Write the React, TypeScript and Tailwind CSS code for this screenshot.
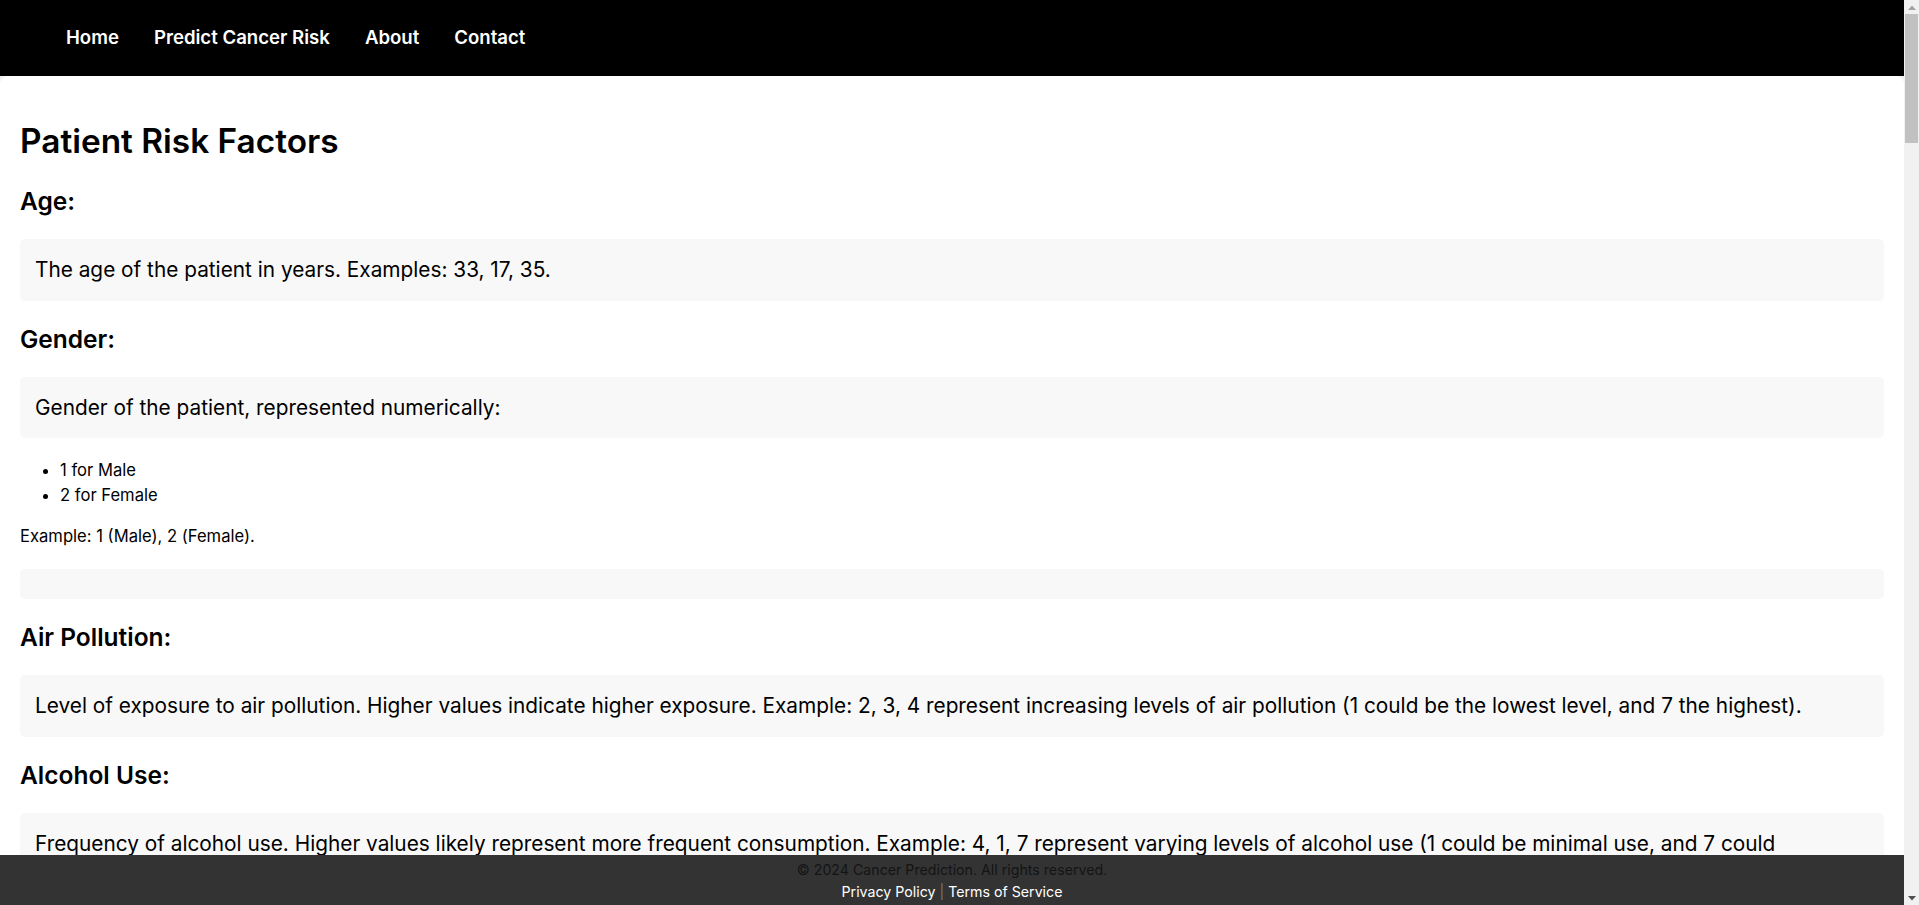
import React from "react";

const navLinks = ["Home", "Predict Cancer Risk", "About", "Contact"];

function Box({ children, wide }: { children?: React.ReactNode; wide?: boolean }) {
  return (
    <div
      className={
        wide
          ? "bg-[#f8f8f8] rounded-[5px] pl-[15px] pr-[30px] py-[15px] my-5 text-[20.8px] leading-[31.5px]"
          : "bg-[#f8f8f8] rounded-[5px] px-[15px] py-[15px] my-5 text-[20.8px] leading-[31.5px]"
      }
    >
      {children}
    </div>
  );
}

function H2({ children }: { children: React.ReactNode }) {
  return <h2 className="text-[24.5px] leading-[36px] font-semibold my-[19.9px]">{children}</h2>;
}

export default function App() {
  return (
    <div className="min-h-screen bg-[#f1f1f1] font-['Inter',sans-serif] text-black pr-[15px]">
      <nav className="bg-black h-[76px] flex items-center pl-[66px] gap-[35px] pb-[2px]">
        {navLinks.map((l) => (
          <a key={l} href="#" className="text-white font-semibold text-[18.6px] leading-[27px]">
            {l}
          </a>
        ))}
      </nav>
      <main className="bg-white rounded-t-[8px] px-5 pt-5 pb-[90px]">
        <h1 className="text-[33.4px] leading-[44px] font-semibold mt-[23px] mb-5">Patient Risk Factors</h1>

        <H2>Age:</H2>
        <Box>The age of the patient in years. Examples: 33, 17, 35.</Box>

        <H2>Gender:</H2>
        <Box>Gender of the patient, represented numerically:</Box>
        <ul className="list-disc pl-10 my-4 text-[16.6px] leading-[25px]">
          <li>1 for Male</li>
          <li>2 for Female</li>
        </ul>
        <p className="text-[16.6px] leading-[25px] my-4">Example: 1 (Male), 2 (Female).</p>
        <Box />

        <H2>Air Pollution:</H2>
        <Box>
          Level of exposure to air pollution. Higher values indicate higher exposure. Example: 2, 3, 4 represent
          increasing levels of air pollution (1 could be the lowest level, and 7 the highest).
        </Box>

        <H2>Alcohol Use:</H2>
        <Box wide>
          Frequency of alcohol use. Higher values likely represent more frequent consumption. Example: 4, 1, 7
          represent varying levels of alcohol use (1 could be minimal use, and 7 could indicate heavy use).
        </Box>

        <H2>Dust Allergy:</H2>
        <Box>
          Severity of dust allergy. Higher values indicate a stronger allergic reaction to dust. Example: 5, 2, 6.
        </Box>

        <H2>Occupational Hazards:</H2>
        <Box>
          Exposure to hazards in the workplace. Higher values indicate greater exposure. Example: 4, 3, 5.
        </Box>

        <H2>Genetic Risk:</H2>
        <Box>Level of inherited genetic risk. Higher values indicate a higher genetic risk. Example: 3, 2, 7.</Box>
      </main>
      <footer className="fixed bottom-0 left-0 right-[15px] h-[50px] bg-[#333] text-center text-[14.2px] pt-[4px]">
        <p className="text-[#141414] leading-[22px]">© 2024 Cancer Prediction. All rights reserved.</p>
        <p className="leading-[22px]">
          <a href="#" className="text-white">Privacy Policy</a>
          <span className="text-[#777]"> | </span>
          <a href="#" className="text-white">Terms of Service</a>
        </p>
      </footer>
      <div className="fixed top-0 right-0 bottom-0 w-[15px] bg-[#f1f1f1] flex flex-col items-center">
        <div className="h-[14px] w-full flex items-center justify-center">
          <svg width="8" height="5" viewBox="0 0 8 5">
            <polygon points="0,5 4,0.5 8,5" fill="#a3a3a3" />
          </svg>
        </div>
        <div className="w-[13px] h-[129px] bg-[#c1c1c1]" />
        <div className="flex-1" />
        <div className="h-[14px] w-full flex items-center justify-center">
          <svg width="8" height="5" viewBox="0 0 8 5">
            <polygon points="0,0 8,0 4,4.5" fill="#505050" />
          </svg>
        </div>
      </div>
    </div>
  );
}
